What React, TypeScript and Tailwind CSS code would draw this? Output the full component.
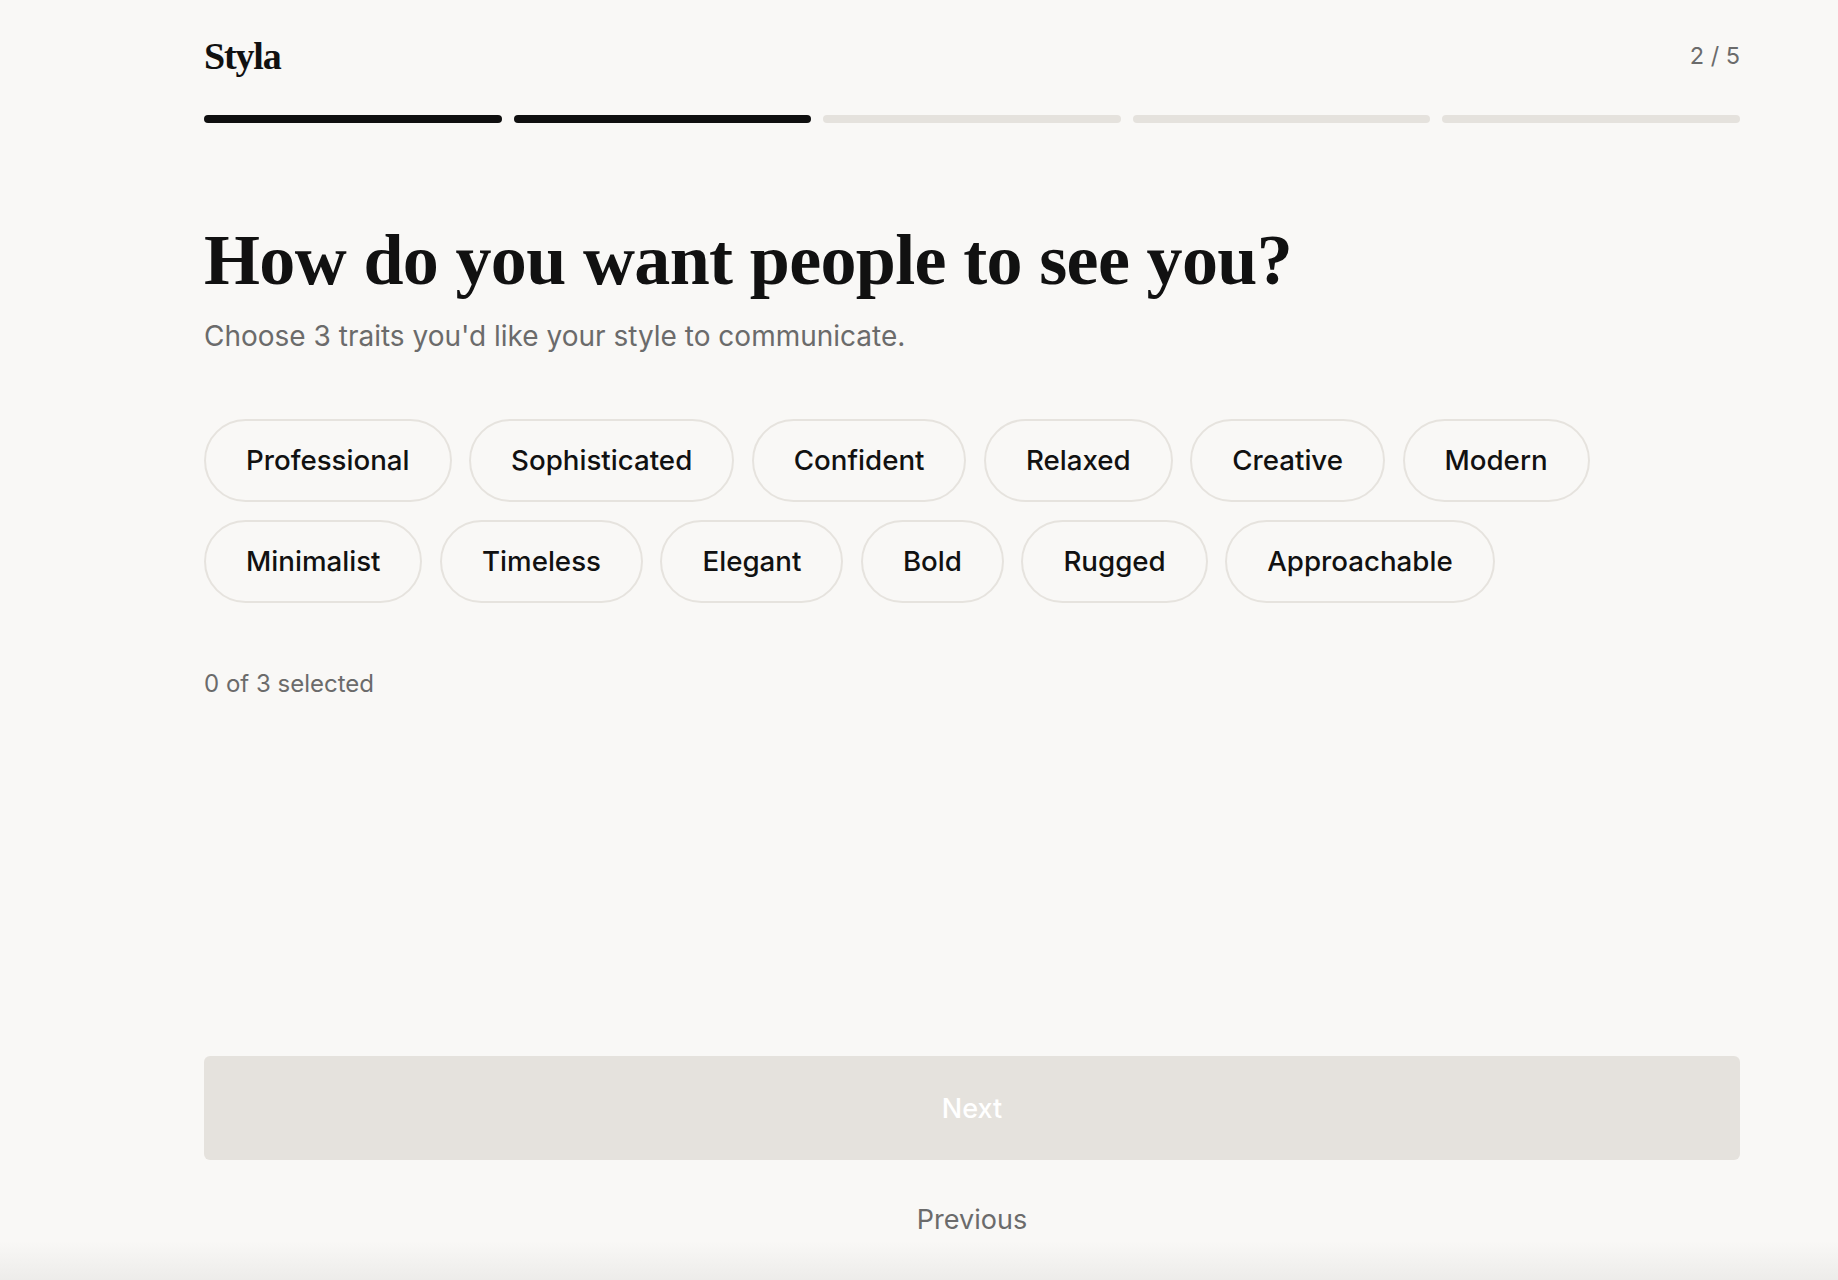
import { useState } from "react";

const traits = [
  "Professional",
  "Sophisticated",
  "Confident",
  "Relaxed",
  "Creative",
  "Modern",
  "Minimalist",
  "Timeless",
  "Elegant",
  "Bold",
  "Rugged",
  "Approachable",
];

const steps = [true, true, false, false, false];

const App = () => {
  const [selected, setSelected] = useState<string[]>([]);

  const toggle = (trait: string) => {
    setSelected((prev) => {
      if (prev.includes(trait)) return prev.filter((t) => t !== trait);
      if (prev.length >= 3) return prev;
      return [...prev, trait];
    });
  };

  const ready = selected.length === 3;

  return (
    <div className="flex h-[1280px] flex-col bg-[#f9f8f6] font-['Inter','Liberation_Sans',sans-serif] text-[#111111]">
      <div className="flex flex-1 flex-col pl-[204px] pr-[98px]">
        {/* Header */}
        <header className="flex items-center justify-between pt-[37px]">
          <span className="font-['Liberation_Serif',serif] text-[38px] font-bold leading-[38px] tracking-[-0.03em]">
            Styla
          </span>
          <span className="text-[23.5px] leading-none text-[#6b6b6b]">2 / 5</span>
        </header>

        {/* Progress */}
        <div className="mt-10 flex gap-3">
          {steps.map((done, i) => (
            <div
              key={i}
              className={`h-2 flex-1 rounded-full ${done ? "bg-[#0f0f0f]" : "bg-[#e5e2dd]"}`}
            />
          ))}
        </div>

        {/* Question */}
        <h1 className="mt-[101px] font-['Liberation_Serif',serif] text-[72px] font-bold leading-none tracking-[-0.009em]">
          How do you want people to see you?
        </h1>
        <p className="mt-5 text-[28px] leading-[40px] text-[#6b6b6b]">
          Choose 3 traits you'd like your style to communicate.
        </p>

        <div className="mt-[63px] flex flex-wrap gap-x-[17.5px] gap-y-[17.5px]">
          {traits.map((trait) => {
            const on = selected.includes(trait);
            return (
              <button
                key={trait}
                onClick={() => toggle(trait)}
                className={`rounded-full border-2 px-10 py-[18px] text-[27.7px] font-medium leading-[43px] ${
                  on
                    ? "border-[#0f0f0f] bg-[#0f0f0f] text-white"
                    : "border-[#e6e3de] bg-transparent text-[#111111]"
                }`}
              >
                {trait}
              </button>
            );
          })}
        </div>

        <p className="mt-[63px] text-[24px] leading-9 text-[#6b6b6b]">
          {selected.length} of 3 selected
        </p>

        {/* Footer actions */}
        <div className="mt-auto flex flex-col items-center gap-10 pb-px">
          <button
            disabled={!ready}
            className={`h-[104px] w-full rounded-md text-[27px] font-medium leading-[40px] text-white ${
              ready ? "bg-[#0f0f0f]" : "bg-[#e5e2dd]"
            }`}
          >
            <span className="relative top-px">Next</span>
          </button>
          <button className="text-[27px] leading-[40px] text-[#6b6b6b]">Previous</button>
        </div>
      </div>
      <div className="h-[39px] shrink-0 bg-gradient-to-b from-[#f9f8f6] to-[#edecea]" />
    </div>
  );
};

export default App;
